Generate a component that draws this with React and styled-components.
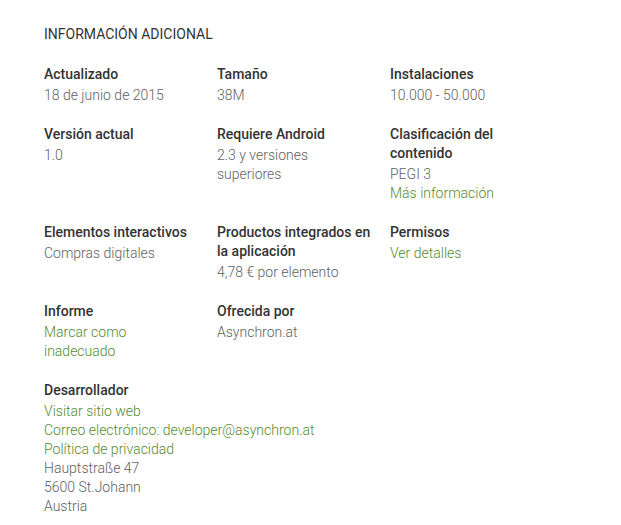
import styled, {createGlobalStyle} from 'styled-components';

const items = [
  {label: 'Actualizado', lines: [{text: '18 de junio de 2015'}]},
  {label: 'Tamaño', lines: [{text: '38M'}]},
  {label: 'Instalaciones', lines: [{text: '10.000 - 50.000'}]},
  {label: 'Versión actual', lines: [{text: '1.0'}]},
  {label: 'Requiere Android', lines: [{text: '2.3 y versiones superiores'}]},
  {
    label: 'Clasificación del contenido',
    lines: [{text: 'PEGI 3'}, {text: 'Más información', link: true}],
  },
  {label: 'Elementos interactivos', lines: [{text: 'Compras digitales'}]},
  {label: 'Productos integrados en la aplicación', lines: [{text: '4,78 € por elemento'}]},
  {label: 'Permisos', lines: [{text: 'Ver detalles', link: true}]},
  {label: 'Informe', lines: [{text: 'Marcar como inadecuado', link: true}]},
  {label: 'Ofrecida por', lines: [{text: 'Asynchron.at'}]},
];

const developer = [
  {text: 'Visitar sitio web', link: true},
  {text: 'Correo electrónico: developer@asynchron.at', link: true},
  {text: 'Política de privacidad', link: true},
  {text: 'Hauptstraße 47'},
  {text: '5600 St.Johann'},
  {text: 'Austria'},
];

export default function App() {
  return (
    <>
      <GlobalStyle />
      <Section>
        <Title>Información adicional</Title>
        <Grid>
          {items.map((item) => (
            <Cell key={item.label}>
              <Label>{item.label}</Label>
              {item.lines.map((line) => (
                <Value key={line.text} $link={line.link}>
                  {line.text}
                </Value>
              ))}
            </Cell>
          ))}
        </Grid>
        <Developer>
          <Label>Desarrollador</Label>
          {developer.map((line) => (
            <Value key={line.text} $link={line.link}>
              {line.text}
            </Value>
          ))}
        </Developer>
      </Section>
    </>
  );
}

const GlobalStyle = createGlobalStyle`
  body {
    margin: 0;
    background: #fff;
    font-family: Roboto, "Liberation Sans", sans-serif;
  }
`;

const Section = styled.div`
  padding: 24px 44px 0;
`;

const Title = styled.h2`
  margin: 0 0 21px;
  font-size: 14px;
  font-weight: 400;
  line-height: 20px;
  text-transform: uppercase;
  color: #333;
`;

const Grid = styled.div`
  display: grid;
  grid-template-columns: repeat(3, 173px);
  row-gap: 20px;
`;

const Cell = styled.div`
  display: flex;
  flex-direction: column;
  padding-right: 18px;
`;

const Developer = styled(Cell)`
  margin-top: 20px;
`;

const Label = styled.div`
  font-size: 14px;
  font-weight: 500;
  line-height: 19px;
  color: #333;
  margin-bottom: 2px;
`;

const Value = styled.div`
  font-size: 14px;
  font-weight: 300;
  line-height: 19px;
  color: ${(p) => (p.$link ? '#558b2f' : '#616161')};
  cursor: ${(p) => (p.$link ? 'pointer' : 'default')};
`;
